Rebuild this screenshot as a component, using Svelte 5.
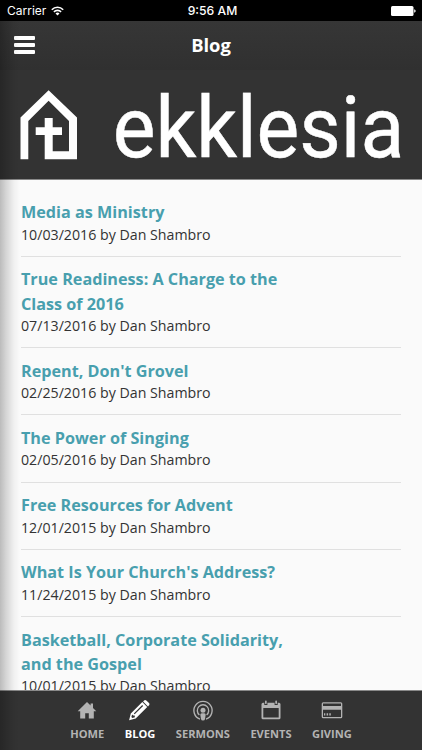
<script lang="ts">
	interface Post {
		title: string;
		date: string;
		author: string;
	}

	type TabId = 'home' | 'blog' | 'sermons' | 'events' | 'giving';

	const posts: Post[] = [
		{ title: 'Media as Ministry', date: '10/03/2016', author: 'Dan Shambro' },
		{
			title: 'True Readiness: A Charge to the Class of 2016',
			date: '07/13/2016',
			author: 'Dan Shambro'
		},
		{ title: "Repent, Don't Grovel", date: '02/25/2016', author: 'Dan Shambro' },
		{ title: 'The Power of Singing', date: '02/05/2016', author: 'Dan Shambro' },
		{ title: 'Free Resources for Advent', date: '12/01/2015', author: 'Dan Shambro' },
		{ title: "What Is Your Church's Address?", date: '11/24/2015', author: 'Dan Shambro' },
		{
			title: 'Basketball, Corporate Solidarity, and the Gospel',
			date: '10/01/2015',
			author: 'Dan Shambro'
		}
	];

	const tabs: { id: TabId; label: string }[] = [
		{ id: 'home', label: 'Home' },
		{ id: 'blog', label: 'Blog' },
		{ id: 'sermons', label: 'Sermons' },
		{ id: 'events', label: 'Events' },
		{ id: 'giving', label: 'Giving' }
	];

	let activeTab = $state<TabId>('blog');
</script>

<div class="screen">
	<div class="status-bar">
		<div class="carrier">
			<span>Carrier</span>
			<svg width="13" height="10" viewBox="0 0 13 10" fill="none" stroke="#fff" stroke-width="1.6">
				<path d="M0.8 3.7a8 8 0 0 1 11.4 0" />
				<path d="M2.9 5.9a5.1 5.1 0 0 1 7.2 0" />
				<path d="M6.5 9.6 4.5 7.5a2.8 2.8 0 0 1 4 0z" fill="#fff" stroke="none" />
			</svg>
		</div>
		<span class="time">9:56 AM</span>
		<svg class="battery" width="25" height="10" viewBox="0 0 25 10" fill="#fff">
			<rect width="22.5" height="10" rx="1.5" />
			<path d="M23.2 3.3q1.5 .4 1.5 1.7t-1.5 1.7z" />
		</svg>
	</div>

	<div class="app">
		<header class="nav-bar">
			<button class="menu" aria-label="Menu">
				<span></span>
				<span></span>
				<span></span>
			</button>
			<h1>Blog</h1>
		</header>

		<div class="banner">
			<svg width="422" height="109" viewBox="0 0 422 109" fill="#fff">
				<path
					d="M20.5 89.3V47.5L48.6 20.3 77 47.5V89.3H44.7V65H35.7V57.3H44.7V48H52.7V57.3H62V65H52.7V81.3H69V51L48.6 30.7 28.3 51V89.3z"
				/>
				<text x="112.7" y="87" textLength="291.5" lengthAdjust="spacingAndGlyphs">ekklesia</text>
			</svg>
		</div>

		<main class="posts">
			{#each posts as post (post.date)}
				<article class="post">
					<h2>{post.title}</h2>
					<p>{post.date} by {post.author}</p>
				</article>
			{/each}
		</main>

		<nav class="tab-bar">
			{#each tabs as tab (tab.id)}
				<button
					class="tab {tab.id}"
					class:active={activeTab === tab.id}
					onclick={() => (activeTab = tab.id)}
				>
					<svg width="22" height="22" viewBox="0 0 22 22" fill="currentColor">
						{#if tab.id === 'home'}
							<path d="M11 2 1.7 11.2H4.2V18.5H9.2V13.3H12.8V18.5H17.8V11.2H20.3L17 7.9V3.4H14.6V5.5z" />
						{:else if tab.id === 'blog'}
							<g transform="translate(-0.7 0)">
								<path
									fill-rule="evenodd"
									d="M.8 20.2 2.5 13.6 14 2.1 18.9 7 7.4 18.5zM3.8 14.4 3.1 17.1 4 18 6.6 17.2 6.4 15.6 4.9 15.4zM5.5 13.4 6.4 14.3 14.8 5.9 13.9 5z"
								/>
								<path d="M14.8 1.5 15.5.7q1.2-1.2 2.5-.3l2.7 2.6q1 1.3-.2 2.6l-.8.8z" />
							</g>
						{:else if tab.id === 'sermons'}
							<g fill="none" stroke="currentColor" stroke-width="1.35">
								<path d="M8 19.1A9.1 9.1 0 1 1 14 19.1" />
								<path d="M7.4 14.9A5.7 5.7 0 1 1 14.6 14.9" />
							</g>
							<circle cx="11" cy="10.2" r="2.5" />
							<path d="M8.3 14.8q0-1.5 1.5-1.5h2.4q1.5 0 1.5 1.5l-.7 4.2q-.2 1.6-2 1.6t-2-1.6z" />
						{:else if tab.id === 'events'}
							<path
								fill-rule="evenodd"
								d="M3 2.7H4.3V4.9H7.4V2.7H14.6V4.9H17.7V2.7H19Q20.5 2.7 20.5 4.2V17.7Q20.5 19.2 19 19.2H3Q1.5 19.2 1.5 17.7V4.2Q1.5 2.7 3 2.7zM3.3 7.9V17.4H18.7V7.9z"
							/>
							<rect x="5" y=".6" width="1.7" height="3.5" rx=".8" />
							<rect x="15.3" y=".6" width="1.7" height="3.5" rx=".8" />
						{:else}
							<path
								fill-rule="evenodd"
								d="M2.2 2.3H19.8Q21.3 2.3 21.3 3.8V16.8Q21.3 18.3 19.8 18.3H2.2Q.7 18.3 .7 16.8V3.8Q.7 2.3 2.2 2.3zM2 3.6V6H20V3.6zM2 9.7V17H20V9.7z"
							/>
							<path d="M3 13.2h1.3v2.3H3zM5.6 13.2h1.5v2.3H5.6zM8.3 13.2h1.5v2.3H8.3z" />
						{/if}
					</svg>
					<span>{tab.label}</span>
				</button>
			{/each}
		</nav>
	</div>
</div>

<style>
	:global(body) {
		margin: 0;
		background: #fafafa;
	}

	.screen {
		display: flex;
		flex-direction: column;
		width: 422px;
		height: 750px;
		overflow: hidden;
		font-family: 'Open Sans', sans-serif;
		color: #333;
	}

	/* Status bar */
	.status-bar {
		flex: none;
		display: grid;
		grid-template-columns: 1fr auto 1fr;
		align-items: center;
		height: 21px;
		padding: 0 6px 0 7px;
		box-sizing: border-box;
		background: #000;
		color: #fff;
		font-family: Inter, sans-serif;
		font-size: 12px;
	}

	.carrier {
		display: flex;
		align-items: center;
		gap: 5px;
	}

	.time {
		padding-left: 2px;
		font-size: 12.2px;
		font-weight: 500;
	}

	.battery {
		justify-self: end;
	}

	.app {
		position: relative;
		flex: 1;
		min-height: 0;
		display: flex;
		flex-direction: column;
	}

	/* Side shadow left by the drawer underneath */
	.app::before {
		content: '';
		position: absolute;
		inset: 0 auto 0 0;
		width: 20px;
		z-index: 1;
		pointer-events: none;
		background: linear-gradient(
			to right,
			rgba(0, 0, 0, 0.25),
			rgba(0, 0, 0, 0.15) 30%,
			rgba(0, 0, 0, 0.04) 70%,
			transparent
		);
	}

	.nav-bar {
		flex: none;
		display: grid;
		grid-template-columns: 50px 1fr 50px;
		align-items: center;
		height: 49px;
		background: linear-gradient(#363636, #303030);
		color: #fff;
	}

	.nav-bar h1 {
		margin: 0 0 2px;
		font-size: 18.4px;
		line-height: 24px;
		font-weight: 700;
		text-align: center;
	}

	.menu {
		display: flex;
		flex-direction: column;
		gap: 3px;
		width: 35px;
		padding: 0 0 2px 14px;
		border: 0;
		background: none;
	}

	.menu span {
		height: 4px;
		border-radius: 1px;
		background: #fff;
	}

	.banner {
		flex: none;
		height: 109px;
		border-bottom: 1px solid #8a8a8a;
		background: #333;
	}

	.banner svg {
		display: block;
		overflow: visible;
	}

	.banner text {
		font-family: Roboto, sans-serif;
		font-size: 86px;
		stroke: #fff;
		stroke-width: 0.5px;
	}

	/* Post list */
	.posts {
		flex: 1;
		min-height: 0;
		overflow: hidden;
		padding: 9.6px 21px 0;
		background: #fafafa;
	}

	.post {
		padding: 10.7px 0 12.2px;
		border-bottom: 1px solid #e0e0e0;
	}

	.post h2 {
		max-width: 285px;
		margin: 0;
		font-size: 16.2px;
		line-height: 24.3px;
		font-weight: 700;
		color: #489fae;
	}

	.post p {
		margin: 0;
		font-size: 14.2px;
		line-height: 19px;
	}

	/* Tab bar */
	.tab-bar {
		flex: none;
		display: flex;
		justify-content: center;
		gap: 20.5px;
		height: 59px;
		border-top: 1px solid #8a8a8a;
		background: #333;
	}

	.tab {
		display: flex;
		flex-direction: column;
		align-items: center;
		padding: 9px 0 0;
		border: 0;
		background: none;
		color: #b3b3b3;
		font-family: inherit;
	}

	.tab span {
		margin-top: 4px;
		font-size: 11.1px;
		line-height: 15px;
		font-weight: 700;
		text-transform: uppercase;
	}

	.active {
		color: #fff;
	}
</style>
